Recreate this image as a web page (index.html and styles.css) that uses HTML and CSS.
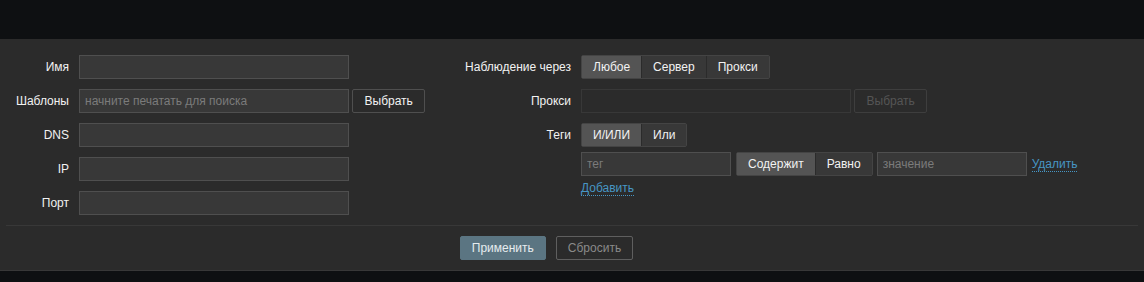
FILE: index.html
```html
<!DOCTYPE html>
<html lang="ru">

<head>
    <meta charset="UTF-8">
    <title>Фильтр узлов сети</title>
    <link rel="stylesheet" href="styles.css">
</head>

<body>
    <div class="top-bar"></div>

    <form class="filter">
        <div class="filter-columns">
            <!-- левая колонка -->
            <div class="form-grid form-left">
                <label class="form-label">Имя</label>
                <div class="form-field"><input class="text-box wide" type="text"></div>

                <label class="form-label">Шаблоны</label>
                <div class="form-field">
                    <input class="text-box wide" type="text" placeholder="начните печатать для поиска">
                    <button type="button" class="btn-alt">Выбрать</button>
                </div>

                <label class="form-label">DNS</label>
                <div class="form-field"><input class="text-box wide" type="text"></div>

                <label class="form-label">IP</label>
                <div class="form-field"><input class="text-box wide" type="text"></div>

                <label class="form-label">Порт</label>
                <div class="form-field"><input class="text-box wide" type="text"></div>
            </div>

            <!-- правая колонка -->
            <div class="form-grid form-right">
                <label class="form-label">Наблюдение через</label>
                <div class="form-field">
                    <ul class="radio-list">
                        <li class="checked">Любое</li>
                        <li>Сервер</li>
                        <li>Прокси</li>
                    </ul>
                </div>

                <label class="form-label">Прокси</label>
                <div class="form-field">
                    <input class="text-box wide" type="text" disabled>
                    <button type="button" class="btn-alt" disabled>Выбрать</button>
                </div>

                <label class="form-label">Теги</label>
                <div class="form-field tags-field">
                    <ul class="radio-list">
                        <li class="checked">И/ИЛИ</li>
                        <li>Или</li>
                    </ul>
                    <div class="tag-row">
                        <input class="text-box narrow" type="text" placeholder="тег">
                        <ul class="radio-list">
                            <li class="checked">Содержит</li>
                            <li>Равно</li>
                        </ul>
                        <input class="text-box narrow" type="text" placeholder="значение">
                        <a class="link-action" href="#">Удалить</a>
                    </div>
                    <div class="tag-add">
                        <a class="link-action" href="#">Добавить</a>
                    </div>
                </div>
            </div>
        </div>

        <div class="filter-footer">
            <button type="button" class="btn-apply">Применить</button>
            <button type="button" class="btn-reset">Сбросить</button>
        </div>
    </form>

    <div class="bottom-bar"></div>
</body>

</html>
```

FILE: styles.css
```css
/* тёмная тема фильтра */
:root {
    --page-bg: #0e1012;
    --panel-bg: #2b2b2b;
    --field-bg: #383838;
    --field-border: #4f4f4f;
    --text: #f2f2f2;
    --link: #4796c4;
}

body {
    margin: 0;
    background-color: var(--page-bg);
    font-family: "Liberation Sans", Arial, sans-serif;
    font-size: 12px;
    color: var(--text);
}

.top-bar {
    height: 39px;
}

.filter {
    background-color: var(--panel-bg);
    border-bottom: 1px solid #383838;
    padding-top: 16px;
}

.filter-columns {
    display: flex;
    align-items: flex-start;
}

.form-grid {
    display: grid;
    column-gap: 10px;
    row-gap: 10px;
    align-items: start;
    align-content: start;
}

.form-left {
    width: 440px;
    grid-template-columns: 69px auto;
}

.form-right {
    grid-template-columns: 131px auto;
}

.form-label {
    text-align: right;
    line-height: 24px;
    white-space: nowrap;
}

.form-field {
    display: flex;
    gap: 3px;
}

.tags-field {
    flex-direction: column;
    gap: 0;
}

.text-box {
    box-sizing: border-box;
    height: 24px;
    margin: 0;
    padding: 0 5px;
    background-color: var(--field-bg);
    border: 1px solid var(--field-border);
    color: var(--text);
    font-family: inherit;
    font-size: 12px;
    outline: none;
}

.text-box::placeholder {
    color: #7b7b7b;
}

.text-box:disabled {
    background-color: #2b2b2b;
    border-color: #383838;
}

.wide {
    width: 270px;
}

.narrow {
    width: 150px;
}

.btn-alt {
    box-sizing: border-box;
    height: 24px;
    padding: 0 11.5px;
    background-color: #2b2b2b;
    border: 1px solid var(--field-border);
    border-radius: 2px;
    color: var(--text);
    font-family: inherit;
    font-size: 12px;
}

.btn-alt:disabled {
    color: #555;
    border-color: #3e3e3e;
}

/* сегментированный переключатель */
.radio-list {
    display: flex;
    margin: 0;
    padding: 0;
    list-style: none;
    border: 1px solid #444;
    border-radius: 2px;
    align-self: flex-start;
}

.radio-list li {
    height: 22px;
    line-height: 22px;
    padding: 0 11px;
    background-color: var(--field-bg);
    border-left: 1px solid #2b2b2b;
}

.radio-list li:first-child {
    border-left: none;
}

.radio-list li.checked {
    background-color: #545454;
}

.tag-row {
    display: flex;
    align-items: center;
    margin-top: 5px;
    gap: 5px;
}

.tag-row .radio-list {
    margin-right: -1px;
}

.tag-add {
    margin-top: 5px;
    line-height: 14px;
}

.link-action {
    color: var(--link);
    text-decoration: none;
    border-bottom: 1px dotted var(--link);
}

.filter-footer {
    display: flex;
    justify-content: center;
    gap: 10px;
    margin: 10px 6px 0;
    padding: 10px 51px 10px 0;
    border-top: 1px solid #383838;
}

.btn-apply,
.btn-reset {
    box-sizing: border-box;
    height: 24px;
    padding: 0 11px;
    border-radius: 2px;
    font-family: inherit;
    font-size: 12px;
}

.btn-apply {
    background-color: #5b7582;
    border: 1px solid #5b7582;
    color: #e6ecef;
}

.btn-reset {
    background-color: transparent;
    border: 1px solid #5f5f5f;
    color: #8a8a8a;
}

.bottom-bar {
    height: 12px;
}
```
